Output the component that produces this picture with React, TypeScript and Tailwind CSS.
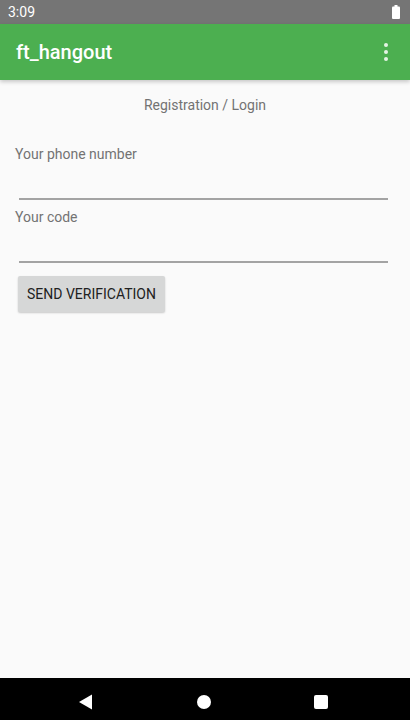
const App = () => {
  return (
    <div
      className="w-[410px] h-[720px] flex flex-col bg-[#fafafa] overflow-hidden"
      style={{ fontFamily: "Roboto, 'Liberation Sans', sans-serif" }}
    >
      {/* status bar */}
      <div className="h-[24px] bg-[#757575] flex items-center justify-between pl-[8px] pr-[10px] shrink-0">
        <span className="text-[14px] text-white leading-none">3:09</span>
        <svg width="8" height="14" viewBox="0 0 8 14">
          <rect x="2.5" y="0" width="3" height="2" fill="#fff" />
          <rect x="0" y="1.5" width="8" height="12.5" rx="1" fill="#fff" />
        </svg>
      </div>

      {/* app bar */}
      <div className="h-[56px] bg-[#4caf50] flex items-center justify-between pl-[16px] pr-[22px] shrink-0 shadow-[0_2px_4px_rgba(0,0,0,0.2)]">
        <span className="text-[20px] font-medium text-white">ft_hangout</span>
        <div className="flex flex-col gap-[3px]">
          <span className="w-[4px] h-[4px] rounded-full bg-white/85" />
          <span className="w-[4px] h-[4px] rounded-full bg-white/85" />
          <span className="w-[4px] h-[4px] rounded-full bg-white/85" />
        </div>
      </div>

      {/* content */}
      <div className="flex-1 flex flex-col px-[15px]">
        <p className="text-center text-[14px] text-[#737373] mt-[15px]">Registration / Login</p>

        <label className="text-[14px] text-[#737373] mt-[28px]">Your phone number</label>
        <div className="ml-[4px] mr-[7px] mt-[33px] h-[2px] bg-[#a3a3a3]" />

        <label className="text-[14px] text-[#737373] mt-[7px]">Your code</label>
        <div className="ml-[4px] mr-[7px] mt-[33px] h-[2px] bg-[#a3a3a3]" />

        <button className="self-start ml-[3px] mt-[13px] h-[36px] px-[9px] bg-[#d6d7d7] rounded-[2px] text-[14px] text-[#212121] shadow-[0_1px_2px_rgba(0,0,0,0.2)]">
          SEND VERIFICATION
        </button>
      </div>

      {/* nav bar */}
      <div className="h-[42px] bg-black flex items-center pl-[78px] pt-[6px] shrink-0">
        <svg width="14" height="16" viewBox="0 0 14 16">
          <path d="M14 0.5 L14 15.5 L1 8 Z" fill="#fff" />
        </svg>
        <span className="ml-[105px] w-[14px] h-[14px] rounded-full bg-white" />
        <span className="ml-[103px] w-[14px] h-[14px] rounded-[2px] bg-white" />
      </div>
    </div>
  );
};

export default App;
